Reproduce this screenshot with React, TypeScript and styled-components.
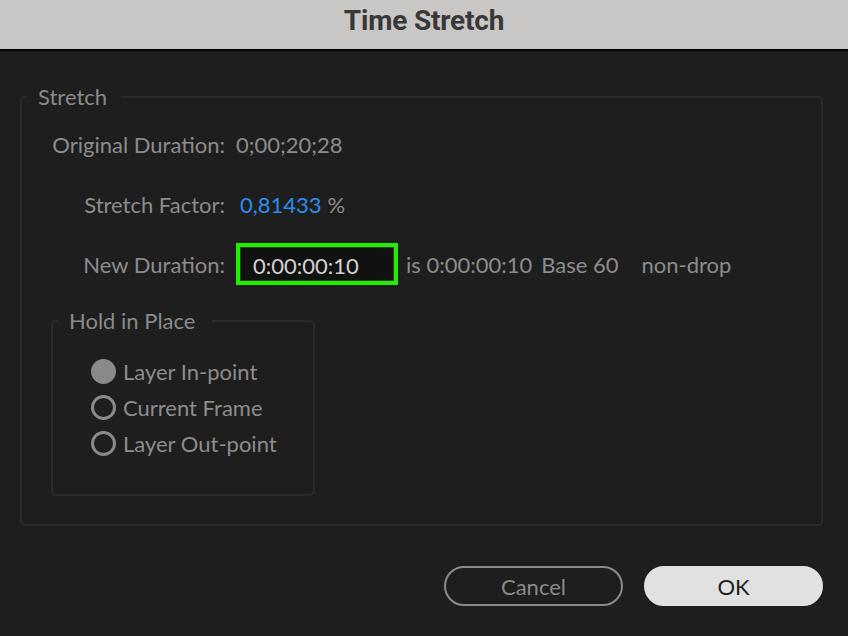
import React, { useState } from 'react'
import styled, { createGlobalStyle } from 'styled-components'

const GlobalStyle = createGlobalStyle`
  html, body {
    margin: 0;
    padding: 0;
    background: #1e1e1e;
  }
  * {
    box-sizing: border-box;
  }
`

const Window = styled.div`
  width: 848px;
  height: 636px;
  background: #1e1e1e;
  font-family: Lato, 'Open Sans', sans-serif;
  color: #8c8c8c;
  overflow: hidden;
  border-radius: 0 0 12px 12px;
`

const TitleBar = styled.div`
  height: 51px;
  background: #c8c7c5;
  border-bottom: 2px solid #050505;
  display: flex;
  align-items: center;
  justify-content: center;
  padding-bottom: 8px;
`

const Title = styled.h1`
  margin: 0;
  font-family: Roboto, sans-serif;
  font-weight: 700;
  font-size: 28px;
  color: #383838;
  letter-spacing: -0.2px;
`

const Body = styled.div`
  padding: 34px 25px 0 20px;
`

const Group = styled.fieldset<{ $width?: number; $height: number }>`
  margin: 0;
  padding: 0;
  border: 2px solid #2b2b2b;
  border-radius: 5px;
  width: ${({ $width }) => ($width ? `${$width}px` : '100%')};
  height: ${({ $height }) => $height}px;
  min-width: 0;
`

const Legend = styled.legend<{ $padRight: number }>`
  margin-left: 5px;
  padding: 0 ${({ $padRight }) => $padRight}px 0 11px;
  font-size: 22px;
  line-height: 24px;
  color: #8a8a8a;
`

const Fields = styled.div`
  display: grid;
  grid-template-columns: 203px auto;
  column-gap: 11px;
  padding-top: 5px;
`

const FieldLabel = styled.div`
  height: 60px;
  display: flex;
  align-items: center;
  justify-content: flex-end;
  font-size: 22px;
`

const FieldValue = styled.div`
  height: 60px;
  display: flex;
  align-items: center;
  font-size: 22px;
`

const Factor = styled.span`
  padding-left: 4px;
  color: #2d8ceb;
`

const Note = styled.span<{ $gap: number }>`
  margin-left: ${({ $gap }) => $gap}px;
`

const DurationInput = styled.input`
  width: 162px;
  height: 42px;
  border: 4px solid #1ef000;
  box-shadow: inset 0 0 0 1px #3a3a3a;
  background: #111111;
  color: #d2d2d2;
  font-family: Lato, 'Open Sans', sans-serif;
  font-size: 22px;
  padding: 2px 0 0 13px;
  outline: none;
`

const HoldWrap = styled.div`
  padding: 15px 0 0 29px;
`

const RadioList = styled.div`
  display: flex;
  flex-direction: column;
  padding: 20px 0 0 38px;
`

const RadioRow = styled.label`
  height: 36px;
  display: flex;
  align-items: center;
  gap: 7px;
  font-size: 22px;
  cursor: pointer;
`

const RadioDot = styled.span<{ $checked: boolean }>`
  width: 25px;
  height: 25px;
  border-radius: 50%;
  border: 3px solid #8a8a8a;
  background: ${({ $checked }) => ($checked ? '#8a8a8a' : 'transparent')};
  flex-shrink: 0;
`

const Buttons = styled.div`
  display: flex;
  justify-content: flex-end;
  gap: 21px;
  margin-top: 40px;
`

const Button = styled.button<{ $primary?: boolean }>`
  width: 179px;
  height: 40px;
  border-radius: 20px;
  font-family: Lato, 'Open Sans', sans-serif;
  font-size: 22px;
  cursor: pointer;
  border: 2px solid ${({ $primary }) => ($primary ? '#e1e1e1' : '#8a8a8a')};
  background: ${({ $primary }) => ($primary ? '#e1e1e1' : 'transparent')};
  color: ${({ $primary }) => ($primary ? '#1e1e1e' : '#8a8a8a')};
`

const HOLD_OPTIONS = ['Layer In-point', 'Current Frame', 'Layer Out-point']

export default function App() {
  const [hold, setHold] = useState(0)
  const [duration, setDuration] = useState('0:00:00:10')

  return (
    <Window>
      <GlobalStyle />
      <TitleBar>
        <Title>Time Stretch</Title>
      </TitleBar>
      <Body>
        <Group $height={441}>
          <Legend $padRight={14}>Stretch</Legend>
          <Fields>
            <FieldLabel>Original Duration:</FieldLabel>
            <FieldValue>0;00;20;28</FieldValue>
            <FieldLabel>Stretch Factor:</FieldLabel>
            <FieldValue>
              <Factor>0,81433</Factor>
              <Note $gap={6}>%</Note>
            </FieldValue>
            <FieldLabel>New Duration:</FieldLabel>
            <FieldValue>
              <DurationInput value={duration} onChange={(e) => setDuration(e.target.value)} />
              <Note $gap={8}>is 0:00:00:10</Note>
              <Note $gap={9}>Base 60</Note>
              <Note $gap={23}>non-drop</Note>
            </FieldValue>
          </Fields>
          <HoldWrap>
            <Group $width={264} $height={187}>
              <Legend $padRight={17}>Hold in Place</Legend>
              <RadioList>
                {HOLD_OPTIONS.map((label, i) => (
                  <RadioRow key={label} onClick={() => setHold(i)}>
                    <RadioDot $checked={hold === i} />
                    {label}
                  </RadioRow>
                ))}
              </RadioList>
            </Group>
          </HoldWrap>
        </Group>
        <Buttons>
          <Button>Cancel</Button>
          <Button $primary>OK</Button>
        </Buttons>
      </Body>
    </Window>
  )
}
